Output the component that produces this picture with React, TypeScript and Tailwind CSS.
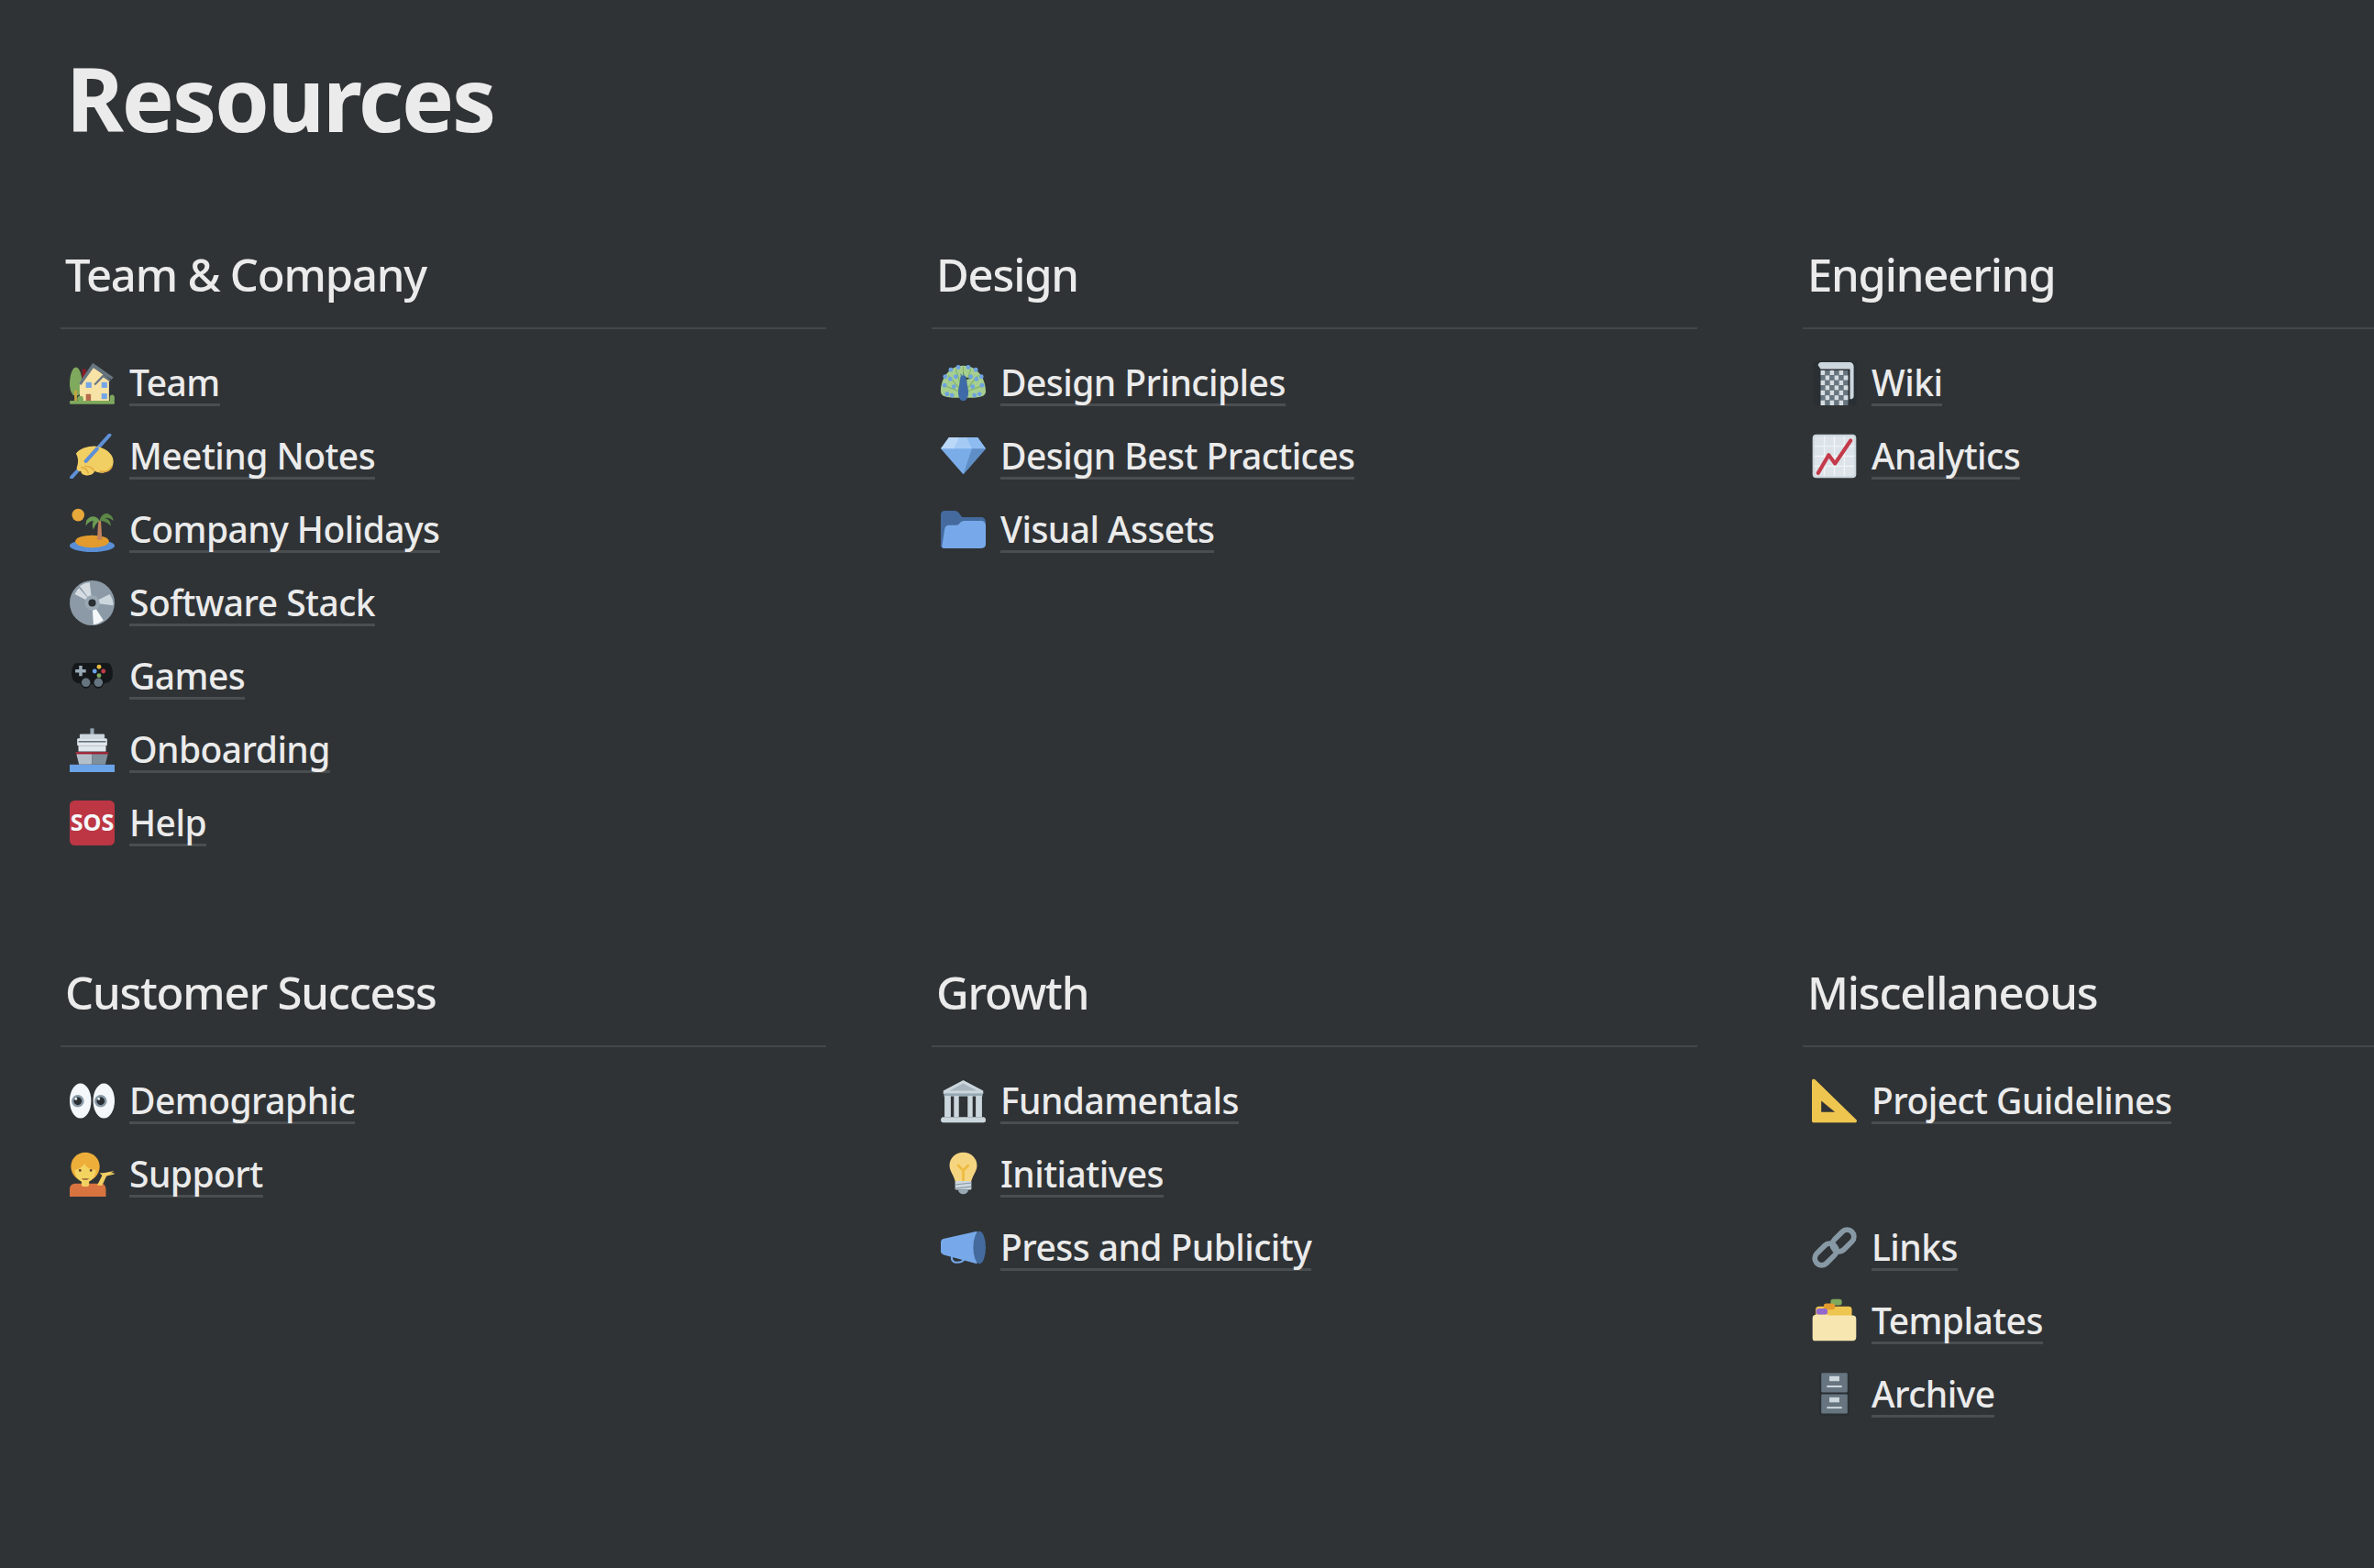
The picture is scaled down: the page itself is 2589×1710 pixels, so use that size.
import React from "react";

const font = "[font-family:'Noto_Sans',sans-serif]";

const Svg = ({ children }: { children: React.ReactNode }) => (
  <svg viewBox="0 0 36 36" className="w-[49px] h-[49px] shrink-0">
    {children}
  </svg>
);

const House = () => (
  <Svg>
    <path d="M5 5.500c3 0 5 7 5 13s-2 10-5 10-5-4-5-10 2-13 5-13z" fill="#7fa95c" />
    <rect x="3.800" y="24" width="2" height="9" fill="#c9a53f" />
    <rect x="10" y="7" width="3" height="7" fill="#8a1c24" />
    <path d="M8 17 18.500 5l13 10v18H8z" fill="#f8e3a6" />
    <path d="M7.500 18 18.500 2 35 13.500l-1.500 2L19 6 9 20z" fill="#66757f" />
    <path d="M19.500 19 27 11l6 5-1 1-5-3.500-6.500 6.500z" fill="#66757f" />
    <rect x="13" y="17.500" width="4.500" height="4.500" fill="#74a5e8" />
    <rect x="25.500" y="17.500" width="4.500" height="4.500" fill="#74a5e8" />
    <rect x="25.500" y="26.500" width="4.500" height="4.500" fill="#74a5e8" />
    <rect x="13" y="27" width="4" height="6" fill="#b5694c" />
    <ellipse cx="8.500" cy="31" rx="2.500" ry="2.500" fill="#7fa95c" />
    <ellipse cx="34" cy="30.500" rx="2" ry="3" fill="#7fa95c" />
    <rect x="0" y="32.300" width="36" height="2.800" rx="1" fill="#7fa95c" />
  </Svg>
);

const Writing = () => (
  <Svg>
    <path d="M32 1 1.500 35" stroke="#5f8fd6" strokeWidth="2.800" strokeLinecap="round" fill="none" />
    <path d="M5 16c3-4 9-6 15-6 8 1 15 6 15 12 0 5-3 8-7 9-3 1-6 0-8-1-1 3-5 4-8 3-2 0-3-2-3-3-3 0-4-2-3-4 1-3 1-7-1-10z" fill="#f2cf62" />
    <path d="M22 12 13 22" stroke="#5f8fd6" strokeWidth="3" strokeLinecap="round" fill="none" />
    <path d="M12 26c3 0 6 1 8 4M9 27c3 0 5 1 6 5" stroke="#e0a83f" strokeWidth="1" fill="none" />
    <path d="M24 30c4 1 8 0 10-4" stroke="#e0a83f" strokeWidth="1.200" fill="none" />
  </Svg>
);

const Island = () => (
  <Svg>
    <circle cx="6.800" cy="6.300" r="5" fill="#e8a83a" />
    <ellipse cx="18" cy="31" rx="18" ry="5" fill="#5a8fd6" />
    <ellipse cx="18" cy="27.500" rx="13.500" ry="5" fill="#e39b2d" />
    <path d="M23 11h2l1 15h-4z" fill="#c1825c" />
    <path d="M24 11c-2-4-7-5-10-1-1 1-1 3-1 5 2-3 4-4 6-4-1 2-1 5 0 7 1-3 3-6 5-7z" fill="#6b9a52" />
    <path d="M24 11c1-5 5-7 8-5 2 1 3 3 3 5-2-2-5-3-7-2 3 0 5 3 5 6-2-2-5-4-9-4z" fill="#5c8746" />
  </Svg>
);

const Disc = () => (
  <Svg>
    <circle cx="18" cy="18" r="18" fill="#8b9aa6" />
    <path d="M18 18 8 4.500a17 17 0 0 1 8-3z M18 18 4 11a17 17 0 0 1 3.500-5z" fill="#d5dde3" />
    <path d="M18 18l14-7a17 17 0 0 1 3 9z" fill="#ccd6dd" />
    <path d="M18 18l9 14a17 17 0 0 1-8 3.500z" fill="#f5f8fa" />
    <circle cx="18" cy="18" r="6" fill="#9aa8b3" />
    <circle cx="18" cy="18" r="3" fill="#292f33" />
  </Svg>
);

const Controller = () => (
  <Svg>
    <path d="M6 7.300h24c3 0 4.500 4 4.500 9 0 5-3 7-6 7.200-1.500 0-2 4.200-5.500 4.200S19.500 24 18 24s-2 3.700-5 3.700S9 23.500 7.500 23.500c-3 0-6-2.500-6-7.200s1.500-9 4.500-9z" fill="#15181a" />
    <path d="M7.500 9.500h2.600v2.900H13V15h-2.900v2.900H7.500V15H4.500v-2.600h3z" fill="#99aab5" />
    <circle cx="23.500" cy="10.500" r="1.800" fill="#e5b93e" />
    <circle cx="27" cy="14" r="1.800" fill="#c43a4a" />
    <circle cx="20" cy="14" r="1.800" fill="#6ba3e8" />
    <circle cx="23.500" cy="17.500" r="1.800" fill="#7fa95c" />
    <circle cx="13" cy="23" r="3.500" fill="#66757f" />
    <circle cx="23" cy="23" r="3.500" fill="#66757f" />
  </Svg>
);

const Ship = () => (
  <Svg>
    <rect x="16.500" y="1" width="3" height="6" fill="#99aab5" />
    <rect x="6" y="9" width="24" height="6" rx="1" fill="#e1e8ed" />
    <rect x="8" y="5.500" width="20" height="4" rx="1" fill="#ccd6dd" />
    <rect x="7" y="11" width="22" height="1.200" fill="#66757f" />
    <rect x="7" y="15" width="22" height="4.500" fill="#e1e8ed" />
    <path d="M5 20h13v10H7.500z" fill="#b4c0c9" />
    <path d="M18 20h13l-2.500 10H18z" fill="#7f8f9b" />
    <rect x="5" y="20" width="26" height="1.600" fill="#a01c2b" />
    <rect x="0" y="30" width="36" height="6" fill="#6ba3e8" />
  </Svg>
);

const Sos = () => (
  <Svg>
    <rect width="36" height="36" rx="4" fill="#bd3644" />
    <text
      x="0.500"
      y="24.200"
      textLength="35"
      lengthAdjust="spacingAndGlyphs"
      fontSize="18.500"
      fontWeight="700"
      fill="#f5f8fa"
      fontFamily="'Noto Sans',sans-serif"
    >
      SOS
    </text>
  </Svg>
);

const Peacock = () => (
  <Svg>
    <path d="M0 25C0 13 8 4.300 18 4.300S36 13 36 25c0 2-2 4-4 4-3 1-8 1-14 1s-11 0-14-1c-2 0-4-2-4-4z" fill="#a6cf8f" />
    <path d="M18 26 6 12M18 26 12 7M18 26V5M18 26 24 7M18 26l12-14M18 26 2 20M18 26l16-6" stroke="#7fb06a" strokeWidth="0.800" fill="none" />
    {[[8, 7.500], [14, 5.500], [22, 5.500], [28, 7.500], [3.500, 13], [32.500, 13], [3, 20], [33, 20], [7.500, 15], [28.500, 15], [10.500, 21], [25.500, 21], [5, 27], [31, 27], [12, 13], [24, 13], [27, 28], [9, 28]].map(([x, y]) => (
      <circle key={`${x}-${y}`} cx={x} cy={y} r="1.800" fill="#6fa3e0" />
    ))}
    <path d="M15.500 15c0-2 1-3 2.500-3s2.500 1 2.500 3c0 2 1 5 1.500 9 .5 4-1 8.500-4 8.500s-4.500-4.500-4-8.500c.5-4 1.500-7 1.500-9z" fill="#3f6aa8" />
    <path d="M20 13.500l4 1.200-4 .6z" fill="#292f33" />
    <path d="M15.500 10.500l.6 2 1-.5zM18 9.500v2.500h.8z" fill="#3f6aa8" />
  </Svg>
);

const Diamond = () => (
  <Svg>
    <path d="M6.500 3h23L36 12 18 32.600 0 12z" fill="#7aade8" />
    <path d="M29.500 3 36 12 18 32.600 25 12z" fill="#5f8dc6" />
    <path d="M6.500 3 0 12h11L15 3z" fill="#bcd8f8" />
    <path d="M15 3h6l4 9H11z" fill="#a5cbf5" />
    <path d="M21 3h8.500L36 12H25z" fill="#8fbcf0" />
  </Svg>
);

const Folder = () => (
  <Svg>
    <path d="M0 6c0-1.700 1.300-3 3-3h8c2 0 3 1 4.500 3l1.500 2h15c2.500 0 4 1.500 4 4v4l-34 17c-1 0-2-1-2-2z" fill="#446a9e" />
    <path d="M1 31 3 18c.3-2 1.500-3.500 3.500-3.500H12c1.500 0 2.500-.5 3.500-2 1-1 2-1.500 3.500-1.500h13c2.500 0 4 1.500 4 4V30c0 2-1.500 3-3.500 3H3c-1.500 0-2.300-.7-2-2z" fill="#77a9ea" />
  </Svg>
);

const Notebook = () => {
  const cells: React.ReactNode[] = [];
  for (let r = 0; r < 7; r++) {
    for (let c = 0; c < 6; c++) {
      cells.push(
        <rect
          key={`${r}-${c}`}
          x={7 + c * 3.67}
          y={8 + r * 4}
          width="3.670"
          height="4"
          fill={(r + c) % 2 === 0 ? "#d5dde3" : "#66757f"}
        />
      );
    }
  }
  return (
    <Svg>
      <rect x="1" y="0.500" width="35" height="35.500" rx="3" fill="#292f33" />
      <path d="M5 4c0-1.500 1-2.500 2.500-2.500H30c2 0 3.500 1.500 3.500 3.500v24c0 1-1 2-2 2h-1V7H7z" fill="#ccd6dd" />
      {cells}
    </Svg>
  );
};

const Chart = () => (
  <Svg>
    <rect x="0.500" y="0.500" width="35" height="35" rx="3" fill="#ccd6dd" />
    <rect x="2" y="2" width="32" height="32" rx="2" fill="#dce3e9" />
    <path d="M10 2v32M18 2v32M26 2v32M2 10h32M2 18h32M2 26h32" stroke="#f0f3f6" strokeWidth="1" />
    <path d="M5 31.500 13.500 17 18.500 24 31 5.500" stroke="#c43a4a" strokeWidth="3" fill="none" strokeLinecap="round" strokeLinejoin="round" />
  </Svg>
);

const Eyes = () => (
  <Svg>
    <ellipse cx="8.600" cy="18" rx="8.600" ry="14" fill="#f5f8fa" />
    <ellipse cx="27.400" cy="18" rx="8.600" ry="14" fill="#f5f8fa" />
    <circle cx="6.500" cy="18.200" r="5" fill="#8899a6" />
    <circle cx="24.800" cy="18.200" r="5" fill="#8899a6" />
    <circle cx="6.500" cy="18.200" r="3.200" fill="#292f33" />
    <circle cx="24.800" cy="18.200" r="3.200" fill="#292f33" />
    <circle cx="5" cy="16.500" r="1" fill="#f5f8fa" />
    <circle cx="23.300" cy="16.500" r="1" fill="#f5f8fa" />
  </Svg>
);

const Person = () => (
  <Svg>
    <path d="M0 36v-6c0-3 2-4.500 5-4.500h5l2.500 2 3-2H25c2.500 0 4 2 4 4.500v6z" fill="#d9733f" />
    <path d="M22 27 27 17l8.500-1.500-6 4L26 27z" fill="#f2cf62" />
    <path d="M24 17h11.500c.5 0 .5 1-.5 1.200l-8 1.800z" fill="#f2cf62" />
    <rect x="9.500" y="21" width="6" height="7" rx="2" fill="#f2cf62" />
    <circle cx="12.500" cy="12" r="11.500" fill="#eeae3a" />
    <path d="M4 14.500c3 0 6-2 8-5 1 3 4 5 9 5 0 6-4 10-8.500 10S4 20.500 4 14.500z" fill="#f4d460" />
    <circle cx="8.300" cy="15" r="1" fill="#66422c" />
    <circle cx="17" cy="15" r="1" fill="#66422c" />
    <path d="M9.500 21.500h6c-1 1.500-5 1.500-6 0z" fill="#915a34" />
  </Svg>
);

const Bank = () => (
  <Svg>
    <path d="M18 1.500 2 10v2.500h32V10z" fill="#ccd6dd" />
    <path d="M18 4 7 10h22z" fill="#a9b6c0" />
    <rect x="2.500" y="12" width="31" height="2.500" fill="#99aab5" />
    <rect x="3" y="14" width="5" height="17" fill="#ccd6dd" />
    <rect x="10.500" y="14" width="4" height="17" fill="#ccd6dd" />
    <rect x="21.500" y="14" width="4" height="17" fill="#ccd6dd" />
    <rect x="28" y="14" width="5" height="17" fill="#ccd6dd" />
    <path d="M2 31h32c1.500 0 2 1 2 2.500S35.500 35.500 34 35.500H2C.5 35.500 0 34.500 0 33.500S.5 31 2 31z" fill="#ccd6dd" />
  </Svg>
);

const Bulb = () => (
  <Svg>
    <path d="M18 0.500c6 0 11 4.500 11 10.500 0 5-4 8-5 15H12c-1-7-5-10-5-15C7 5 12 .5 18 .5z" fill="#f5d580" />
    <path d="M18 24v-9m0 0-4.500-4.500m4.500 4.500 4.500-4.500" stroke="#eebb3f" strokeWidth="2" fill="none" />
    <rect x="11.500" y="23.500" width="13" height="7" rx="1" fill="#ccd6dd" />
    <path d="M11.500 26.500 24.500 25M11.500 29.500l13-1.500" stroke="#8899a6" strokeWidth="0.800" />
    <path d="M14 30.500h8c0 2-2 3.500-4 3.500S14 32.500 14 30.500z" fill="#99aab5" />
  </Svg>
);

const Megaphone = () => (
  <Svg>
    <path d="M0 14c0-2 1-2.500 2-3l27-6v26L3 24c-2-.5-3-1.500-3-3z" fill="#77a9ea" />
    <ellipse cx="31" cy="18" rx="5" ry="13" fill="#446a9e" />
    <path d="M9 25c-1 3 1 5 4 5s5-1 6-3" stroke="#77a9ea" strokeWidth="1.500" fill="none" />
  </Svg>
);

const SetSquare = () => (
  <Svg>
    <path d="M0 2c0-1.500 1.500-2 2.500-1L35.500 33c1 1 .5 2.500-1 2.500H1.500c-1 0-1.500-.5-1.500-1.500z" fill="#eec54f" />
    <path d="M7.500 18 18.500 27h-11z" fill="#2f3337" />
  </Svg>
);

const Link = () => (
  <Svg>
    <g fill="none" stroke="#8899a6" strokeWidth="4.200">
      <rect x="1" y="18" width="20" height="11" rx="5.500" transform="rotate(-45 11 23.500)" />
      <rect x="15" y="7" width="20" height="11" rx="5.500" transform="rotate(-45 25 12.500)" />
    </g>
  </Svg>
);

const CardFolder = () => (
  <Svg>
    <path d="M3 9c0-1.500 1-2.500 2.500-2.500h24c1.500 0 2.500 1 2.500 2.500v6H3z" fill="#eec54f" />
    <rect x="15" y="0.500" width="9" height="5" rx="2" fill="#7fa95c" />
    <rect x="9.500" y="4" width="9" height="5" rx="2" fill="#e39b2d" />
    <rect x="3.500" y="8" width="9" height="5" rx="2" fill="#9268cf" />
    <path d="M0.500 16c0-2 1-3 3-3h9l1 .5h19c2 0 3 1 3 3V31c0 2-1 3-3 3H2.500c-1.500 0-2-1-2-2.500z" fill="#f7e6b0" />
  </Svg>
);

const Cabinet = () => (
  <Svg>
    <rect x="6" y="0.500" width="24" height="35" rx="2" fill="#292f33" />
    <rect x="7.500" y="1" width="21" height="15.500" rx="1" fill="#66757f" />
    <rect x="7.500" y="18" width="21" height="15.500" rx="1" fill="#66757f" />
    <rect x="14" y="3.500" width="8" height="4" fill="#ccd6dd" />
    <rect x="12" y="11" width="12" height="1.500" fill="#ccd6dd" />
    <rect x="14" y="20.500" width="8" height="4" fill="#ccd6dd" />
    <rect x="12" y="28" width="12" height="1.500" fill="#ccd6dd" />
  </Svg>
);

type Item = { label: string; icon?: React.ReactNode };
type Section = { title: string; items: Item[] };

const sections: Section[] = [
  {
    title: "Team & Company",
    items: [
      { label: "Team", icon: <House /> },
      { label: "Meeting Notes", icon: <Writing /> },
      { label: "Company Holidays", icon: <Island /> },
      { label: "Software Stack", icon: <Disc /> },
      { label: "Games", icon: <Controller /> },
      { label: "Onboarding", icon: <Ship /> },
      { label: "Help", icon: <Sos /> },
    ],
  },
  {
    title: "Design",
    items: [
      { label: "Design Principles", icon: <Peacock /> },
      { label: "Design Best Practices", icon: <Diamond /> },
      { label: "Visual Assets", icon: <Folder /> },
    ],
  },
  {
    title: "Engineering",
    items: [
      { label: "Wiki", icon: <Notebook /> },
      { label: "Analytics", icon: <Chart /> },
    ],
  },
  {
    title: "Customer Success",
    items: [
      { label: "Demographic", icon: <Eyes /> },
      { label: "Support", icon: <Person /> },
    ],
  },
  {
    title: "Growth",
    items: [
      { label: "Fundamentals", icon: <Bank /> },
      { label: "Initiatives", icon: <Bulb /> },
      { label: "Press and Publicity", icon: <Megaphone /> },
    ],
  },
  {
    title: "Miscellaneous",
    items: [
      { label: "Project Guidelines", icon: <SetSquare /> },
      { label: "" },
      { label: "Links", icon: <Link /> },
      { label: "Templates", icon: <CardFolder /> },
      { label: "Archive", icon: <Cabinet /> },
    ],
  },
];

export default function App() {
  return (
    <div className={`${font} w-full h-[1710px] overflow-hidden bg-[#2f3336] text-[#ebebeb]`}>
      <h1 className="pl-[72px] pt-[41px] h-[222px] text-[96px] leading-[132px] font-bold tracking-[-2.2px]">Resources</h1>
      <div className="grid grid-cols-[835px_835px_835px] gap-x-[115px] pl-[66px] w-[2800px] auto-rows-[783px]">
        {sections.map((section) => (
          <section key={section.title}>
            <h2 className="h-[137px] border-b-[2px] border-[#43474a] pl-[5px] pt-[43px] text-[49px] leading-[68px] font-[550] tracking-[-1.2px]">
              {section.title}
            </h2>
            <ul className="pt-[18px]">
              {section.items.map((item, i) => (
                <li key={i} className="flex items-center h-[80px] pl-[10px] gap-[16px]">
                  {item.icon}
                  {item.label && (
                    <span className="h-[52px] border-b-[3px] border-[#4b4e51] text-[39px] leading-[51px] font-[550] tracking-[-0.55px]">
                      {item.label}
                    </span>
                  )}
                </li>
              ))}
            </ul>
          </section>
        ))}
      </div>
    </div>
  );
}
